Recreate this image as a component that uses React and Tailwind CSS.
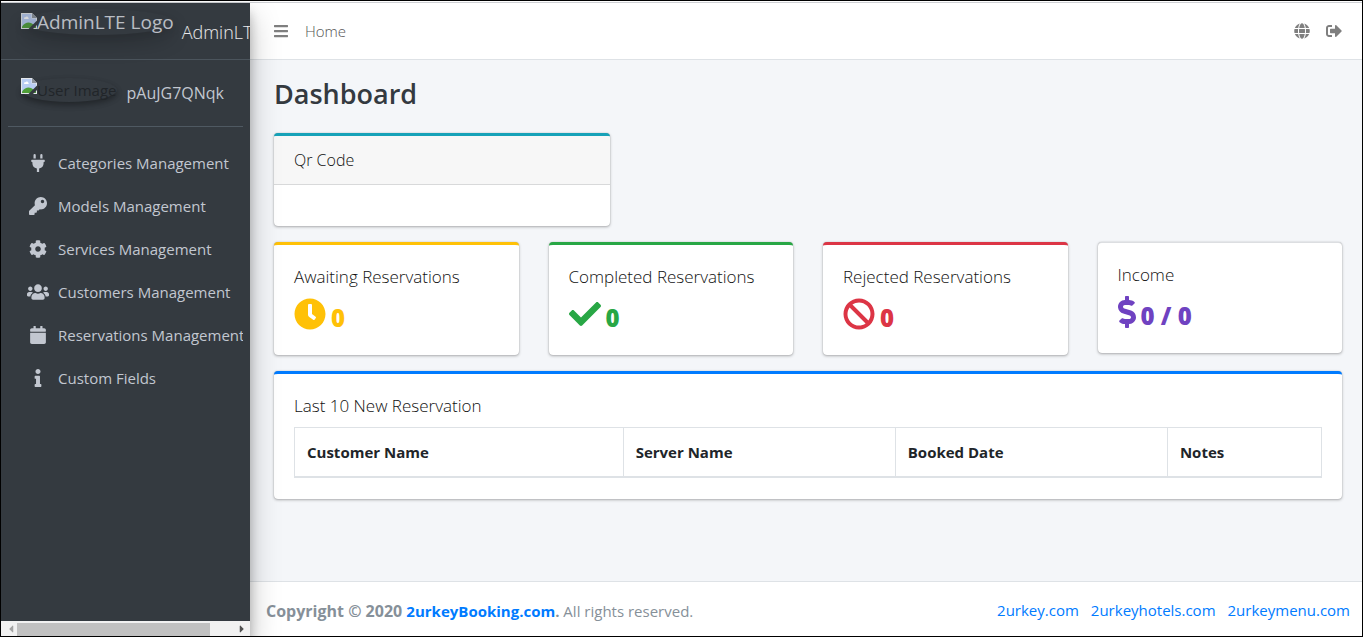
import React from "react";
import {
  FaPlug, FaKey, FaCog, FaUsers, FaCalendar, FaInfo, FaClock, FaCheck,
  FaBan, FaDollarSign, FaBars, FaGlobe, FaSignOutAlt, FaCaretLeft, FaCaretRight,
} from "react-icons/fa";

const navItems = [
  { label: "Categories Management", Icon: FaPlug },
  { label: "Models Management", Icon: FaKey },
  { label: "Services Management", Icon: FaCog },
  { label: "Customers Management", Icon: FaUsers },
  { label: "Reservations Management", Icon: FaCalendar },
  { label: "Custom Fields", Icon: FaInfo },
];

const stats = [
  { label: "Awaiting Reservations", value: "0", Icon: FaClock, border: "border-t-[3px] border-[#ffc107]", color: "text-[#ffc107]", size: "size-8" },
  { label: "Completed Reservations", value: "0", Icon: FaCheck, border: "border-t-[3px] border-[#28a745]", color: "text-[#28a745]", size: "size-8" },
  { label: "Rejected Reservations", value: "0", Icon: FaBan, border: "border-t-[3px] border-[#dc3545]", color: "text-[#dc3545]", size: "size-8" },
  { label: "Income", value: "0 / 0", Icon: FaDollarSign, border: "border-t border-[#dcdee1]", color: "text-[#6f42c1]", size: "h-8 w-[18px]" },
];

const columns = [
  { label: "Customer Name", width: "w-[32%]" },
  { label: "Server Name", width: "w-[26.5%]" },
  { label: "Booked Date", width: "w-[26.5%]" },
  { label: "Notes", width: "w-[15%]" },
];

const cardBase = "rounded bg-white shadow-[0_0_1px_rgba(0,0,0,0.25),0_1px_3px_rgba(0,0,0,0.3)]";

function BrokenImage() {
  return (
    <svg className="size-4 shrink-0" viewBox="0 0 16 16" aria-hidden="true">
      <path d="M0 0h11l5 5v11H0z" fill="#e4e7ea" />
      <path d="M1 1h9.500v4.500H15V15H1z" fill="#b9cdf3" />
      <path d="M3 5.500c0-1 .8-1.500 1.500-1.300C5 3 7 3.200 7 4.500c1 0 1.200 1.500 0 1.500H3.500z" fill="#fff" />
      <path d="M1 15v-1.500C3.500 10 7 8.500 10 10l5 3v2z" fill="#4f9e38" />
      <path d="M11 0v5h5z" fill="#8b9299" />
      <path d="M16 7.500 7.500 16H12l4-4z" fill="#343a40" />
    </svg>
  );
}

function Sidebar() {
  return (
    <aside className="z-10 flex w-[249px] shrink-0 flex-col overflow-hidden bg-[#343a40] text-[#c2c7d0] shadow-[0_14px_28px_rgba(0,0,0,0.25),0_10px_10px_rgba(0,0,0,0.22)]">
      <a href="#" className="flex h-[57px] shrink-0 items-start border-b border-[#4b545c] pl-5 whitespace-nowrap">
        <span className="mt-[6px] flex h-[26px] items-start rounded-[50%] opacity-80 shadow-[0_10px_20px_rgba(0,0,0,0.19),0_4px_8px_rgba(0,0,0,0.12)]">
          <span className="pt-1"><BrokenImage /></span>
          <span className="text-[19px] leading-[26px] text-[#dcdfe4]">AdminLTE Logo</span>
        </span>
        <span className="ml-2 pt-[14px] text-[18px] leading-[30px] font-light text-white/90">AdminLTE 3</span>
      </a>

      <div className="mx-[7px] flex h-[67px] shrink-0 items-start border-b border-[#4f5962] pl-[13px] whitespace-nowrap">
        <span className="mt-[18px] flex h-[24px] items-start rounded-[50%] shadow-[0_3px_6px_rgba(0,0,0,0.16),0_3px_6px_rgba(0,0,0,0.23)]">
          <BrokenImage />
          <span className="text-[15px] leading-6 text-[#212529]">User Image</span>
        </span>
        <a href="#" className="ml-[10px] pt-[21px] text-[16px] leading-6">pAuJG7QNqk</a>
      </div>

      <nav className="mx-[7px] mt-[15px] grow overflow-hidden">
        <ul>
          {navItems.map(({ label, Icon }) => (
            <li key={label}>
              <a href="#" className="flex h-[43px] items-center gap-[7px] pl-[17px] whitespace-nowrap">
                <span className="flex w-[26px] shrink-0 justify-center pb-0.5">
                  <Icon className="h-[18px] w-[22px]" aria-hidden="true" />
                </span>
                <span className="text-[15px]">{label}</span>
              </a>
            </li>
          ))}
        </ul>
      </nav>

      <div className="flex h-[15px] shrink-0 items-center justify-between bg-[#f1f1f1]" aria-hidden="true">
        <FaCaretLeft className="ml-1 size-3 shrink-0 text-[#a3a3a3]" />
        <div className="mt-0.5 mr-[26px] h-[13px] grow bg-[#c1c1c1]" />
        <FaCaretRight className="mr-0.5 size-3 shrink-0 text-[#505050]" />
      </div>
    </aside>
  );
}

function StatCard({ label, value, Icon, border, color, size }) {
  return (
    <section className={`${cardBase} ${border} px-5 pt-[19px] pb-6`}>
      <h2 className="text-[17px] leading-[25px] font-light text-[#111]">{label}</h2>
      <p className={`flex h-[42px] items-start gap-[5px] pt-[9px] ${color}`}>
        <Icon className={size} aria-hidden="true" />
        <span className="pt-1 text-[24px] leading-[32px] font-extrabold">{value}</span>
      </p>
    </section>
  );
}

export default function App() {
  return (
    <div className="flex min-h-screen flex-col border border-black bg-[#f4f6f9] font-['Open_Sans','Noto_Sans',sans-serif] text-[15px] text-[#212529]">
      <div className="h-0.5 shrink-0 border-b border-[#ced0d4] bg-white" />
      <div className="flex grow">
        <Sidebar />
        <div className="flex min-w-0 grow flex-col">
          <header className="flex h-[57px] shrink-0 items-center justify-between border-b border-[#dee2e6] bg-white pr-5 pl-[23px] text-[#7f7f7f]">
            <div className="flex items-center gap-4">
              <button type="button" aria-label="Toggle sidebar"><FaBars className="block size-4" /></button>
              <a href="#" className="font-light text-[#555]">Home</a>
            </div>
            <div className="flex items-center gap-4">
              <button type="button" aria-label="Language"><FaGlobe className="block size-4" /></button>
              <button type="button" aria-label="Sign out"><FaSignOutAlt className="block size-4" /></button>
            </div>
          </header>

          <main className="grow pt-4 pr-5 pb-4 pl-6">
            <h1 className="text-[27px] leading-[35px] font-semibold text-[#343a40]">Dashboard</h1>

            <div className="mt-[22px] grid grid-cols-3 gap-[30px]">
              <section className={`${cardBase} overflow-hidden border-t-[3px] border-[#17a2b8]`}>
                <h2 className="border-b border-[#d8d9da] bg-[#f7f7f7] px-5 py-3 text-[16px] leading-6 font-light text-[#111]">Qr Code</h2>
                <div className="h-[41px]" />
              </section>
            </div>

            <div className="mt-4 grid grid-cols-4 items-start gap-[30px]">
              {stats.map((s) => <StatCard key={s.label} {...s} />)}
            </div>

            <section className={`${cardBase} mt-4 border-t-[3px] border-[#007bff] px-5 pt-[19px] pb-[21px]`}>
              <h2 className="mb-[9px] text-[17px] leading-[25px] font-light text-[#111]">Last 10 New Reservation</h2>
              <table className="w-full table-fixed border-collapse text-left">
                <thead>
                  <tr>
                    {columns.map((c) => (
                      <th key={c.label} scope="col" className={`${c.width} border border-b-2 border-[#dee2e6] px-3 py-3 leading-6 font-bold`}>
                        {c.label}
                      </th>
                    ))}
                  </tr>
                </thead>
              </table>
            </section>
          </main>

          <footer className="flex h-[55px] shrink-0 items-center justify-between border-t border-[#dee2e6] bg-white pt-[3px] pr-3 pl-4 text-[#869099]">
            <p>
              <strong><span className="text-[16px]">Copyright © 2020 </span><a href="#" className="text-[#007bff]">2urkeyBooking.com</a>.</strong> All rights reserved.
            </p>
            <div className="flex gap-3 text-[#007bff]">
              <a href="#">2urkey.com</a>
              <a href="#">2urkeyhotels.com</a>
              <a href="#">2urkeymenu.com</a>
            </div>
          </footer>
        </div>
      </div>
    </div>
  );
}
